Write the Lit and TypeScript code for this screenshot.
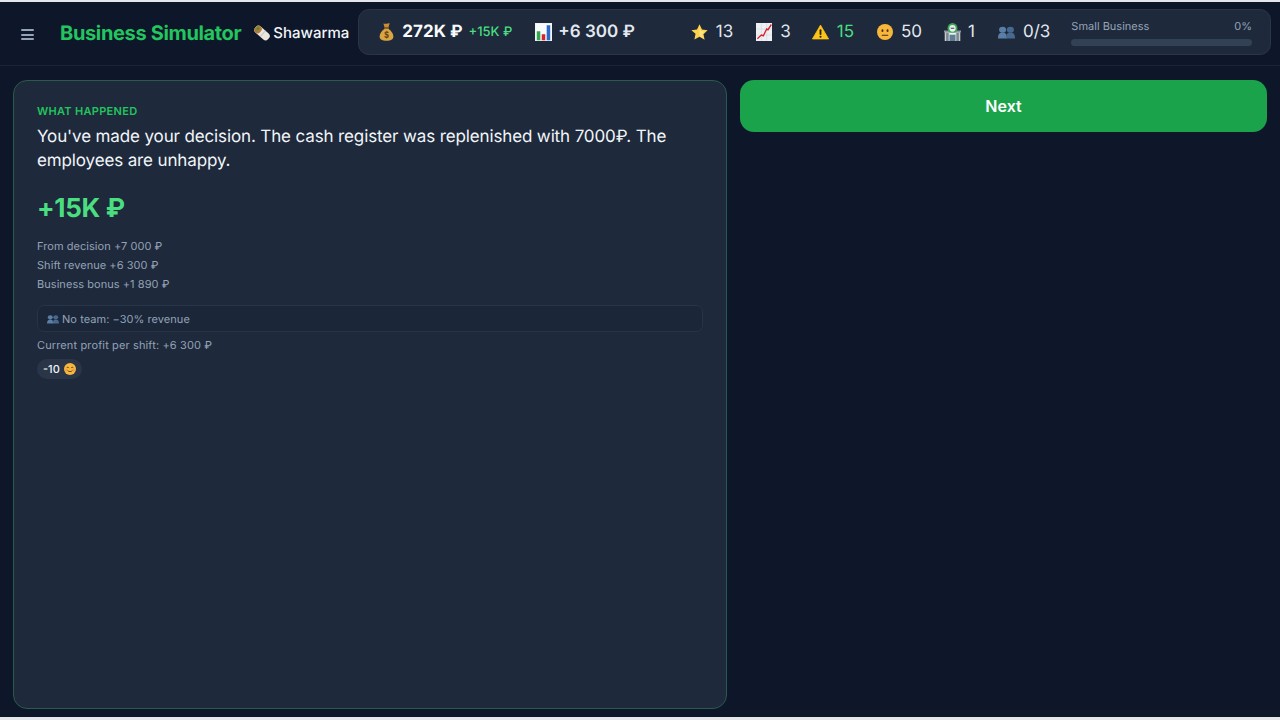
import { LitElement, html, css, svg } from "lit";
import { customElement } from "lit/decorators.js";

const icon = (w: number, h: number, body: unknown, cls = "") =>
  html`<svg class="ic ${cls}" width=${w} height=${h} viewBox="0 0 24 24" preserveAspectRatio="none" aria-hidden="true">${body}</svg>`;

const burrito = svg`
  <g transform="rotate(42 12 12)">
    <rect x="-1" y="6" width="26" height="12" rx="5" fill="#e9e6df"/>
    <rect x="-1" y="6" width="10" height="12" rx="5" fill="#b9793a"/>
    <ellipse cx="3" cy="12" rx="2.800" ry="4.300" fill="#6f8f3a"/>
    <circle cx="3" cy="11" r="1.200" fill="#b5482f"/>
    <rect x="13" y="6" width="1.200" height="12" fill="#bdb9b0"/>
  </g>`;
const bag = svg`
  <path d="M7 0.500c2 1.200 3.200.4 5 .4s3-.8 5-.4l-2 5.500H9z" fill="#c98f36"/>
  <rect x="8" y="5.500" width="8" height="2" rx="1" fill="#8a5a1e"/>
  <path d="M9 7.500C4 10 1 14.500 1 18c0 4 4.500 5.800 11 5.800S23 22 23 18c0-3.500-3-8-8-10.500z" fill="#d9a441"/>
  <text x="12" y="20.500" text-anchor="middle" font-size="13" font-weight="700" font-family="Liberation Sans, sans-serif" fill="#5b3a10">$</text>`;
const bars = svg`
  <rect x="0" y="0" width="24" height="24" fill="#eef1f4"/>
  <rect x="1" y="1" width="22" height="22" fill="#fafbfc"/>
  <rect x="2.500" y="11" width="5" height="12" fill="#2fa84f"/>
  <rect x="9.500" y="15" width="5" height="8" fill="#d8232a"/>
  <rect x="16.500" y="3" width="5" height="20" fill="#2b6cc4"/>`;
const star = svg`<path d="M12 .5l3.500 7.400 8 1-5.900 5.500 1.600 8L12 18l-7.200 3.900 1.600-8L.5 8.900l8-1z" fill="#fbd34d"/>
  <path d="M12 5l2.300 5 5.300.6-3.900 3.600 1 5.200L12 17z" fill="#fff0b0" opacity=".55"/>`;
const trend = svg`
  <rect x="0" y="0" width="24" height="24" fill="#eef1f4"/>
  <path d="M0 8h24M0 16h24M8 0v24M16 0v24" stroke="#c9ced6" stroke-width=".6"/>
  <path d="M2 21l6-5 3 1 5-9 2 1 5-7" fill="none" stroke="#d8232a" stroke-width="2"/>`;
const warn = svg`
  <path d="M12 1.500 23.500 22.500H.5z" fill="#fcc419" stroke="#fcc419" stroke-linejoin="round"/>
  <rect x="10.700" y="8" width="2.600" height="8.500" rx="1.200" fill="#2b2108"/>
  <circle cx="12" cy="19" r="1.500" fill="#2b2108"/>`;
const neutral = svg`
  <circle cx="12" cy="12" r="12" fill="#f6b73c"/>
  <ellipse cx="8.200" cy="10" rx="1.500" ry="2.100" fill="#4a2f0c"/>
  <ellipse cx="15.800" cy="10" rx="1.500" ry="2.100" fill="#4a2f0c"/>
  <rect x="7" y="16" width="10" height="1.600" rx=".8" fill="#4a2f0c"/>`;
const bank = svg`
  <rect x="1" y="11" width="22" height="13" fill="#c7ccd1"/>
  <rect x="0" y="10" width="24" height="2.500" fill="#8f979f"/>
  <circle cx="12" cy="7" r="7" fill="#3aa655"/>
  <circle cx="12" cy="7" r="4.500" fill="#e8f0ea"/>
  <path d="M9.500 7h5" stroke="#445" stroke-width="1.400"/>
  <rect x="3" y="13" width="3.500" height="11" fill="#7b8791"/>
  <rect x="17.500" y="13" width="3.500" height="11" fill="#7b8791"/>
  <rect x="8" y="15" width="8" height="9" fill="#5d7f96"/>
  <rect x="7.500" y="13" width="9" height="2.500" fill="#eef1f3"/>`;
const busts = svg`
  <g fill="#5b7ea6">
    <circle cx="6.500" cy="8" r="5"/>
    <path d="M0 23c0-6 1.500-10 6.500-10s6 4 6 10z"/>
  </g>
  <g fill="#48698f">
    <circle cx="17.500" cy="8" r="5"/>
    <path d="M11.500 23c0-6 1-10 6-10s6.500 4 6.500 10z"/>
  </g>`;
const smile = svg`
  <circle cx="12" cy="12" r="12" fill="#f6b73c"/>
  <path d="M5.500 9.500c1-1.500 3-1.500 4 0M14.500 9.500c1-1.500 3-1.500 4 0" fill="none" stroke="#4a2f0c" stroke-width="1.600" stroke-linecap="round"/>
  <path d="M7.500 15.500c2 2.500 7 2.500 9 0" fill="none" stroke="#4a2f0c" stroke-width="1.600" stroke-linecap="round"/>
  <circle cx="5" cy="14" r="2.400" fill="#ef8a5a" opacity=".7"/>
  <circle cx="19" cy="14" r="2.400" fill="#ef8a5a" opacity=".7"/>`;

@customElement("app-root")
export class AppRoot extends LitElement {
  static styles = css`
    :host {
      display: block;
      height: 720px;
      box-sizing: border-box;
      padding: 2px 0 3px;
      background: #e4e6ea;
      font-family: Inter, "Liberation Sans", sans-serif;
      color: #f1f5f9;
      overflow: hidden;
      text-rendering: geometricPrecision;
    }
    * { box-sizing: border-box; }
    .ic { display: block; flex: none; }
    .app {
      height: 100%;
      background: #0e162a;
      display: flex;
      flex-direction: column;
    }
    header {
      flex: none;
      height: 64px;
      border-bottom: 1px solid #1a2436;
      display: flex;
      align-items: center;
      padding: 0 9px 0 21px;
    }
    .menu {
      flex: none;
      width: 13px;
      height: 11px;
      margin-right: 26px;
      margin-top: 2px;
      display: flex;
      flex-direction: column;
      justify-content: space-between;
    }
    .menu span { display: block; height: 2px; background: #94a3b8; border-radius: 1px; }
    .title {
      font-size: 20px;
      font-weight: 700;
      color: #22c55e;
      white-space: nowrap;
      letter-spacing: -0.35px;
      margin: -2px 13px 0 0;
    }
    .biz {
      display: flex;
      align-items: center;
      gap: 3px;
      font-size: 15px;
      font-weight: 500;
      white-space: nowrap;
      margin: -2px 9px 0 0;
    }
    .stats {
      flex: 1;
      height: 46px;
      margin-top: -3px;
      display: flex;
      align-items: center;
      background: #1e293b;
      border: 1px solid #2a3648;
      border-radius: 11px;
      padding: 0 18px 0 20px;
      white-space: nowrap;
    }
    .s { display: flex; align-items: center; gap: 8px; font-size: 17px; }
    .strong { font-weight: 700; color: #f8fafc; font-size: 17px; }
    .semi { font-weight: 600; color: #e2e8f0; font-size: 17px; }
    .delta { font-size: 13px; font-weight: 500; color: #4ade80; margin-left: -2px; }
    .green { color: #4ade80; }
    .first { gap: 8px; margin-right: 23px; }
    .second { gap: 6px; margin-right: 56px; }
    .m { margin-right: 23px; color: #e2e8f0; }
    .m.tight2 { margin-right: 21px; }
    .m.tight1 { margin-right: 22px; }
    .m.narrow { gap: 7px; }
    .m.last { margin-right: 21px; }
    .prog { flex: 1; display: flex; flex-direction: column; gap: 6px; padding-top: 1px; }
    .prog-top {
      display: flex;
      justify-content: space-between;
      font-size: 11px;
      line-height: 13px;
      color: #94a3b8;
    }
    .track { height: 7px; border-radius: 4px; background: #334155; }
    main {
      flex: 1;
      min-height: 0;
      display: grid;
      grid-template-columns: 714px 527px;
      gap: 13px;
      padding: 14px 13px 8px;
      align-items: start;
    }
    .card {
      height: 100%;
      background: #1e293b;
      border: 1px solid #2a5a4a;
      border-radius: 14px;
      padding: 23px 23px;
      display: flex;
      flex-direction: column;
      align-items: stretch;
    }
    .eyebrow {
      font-size: 11px;
      line-height: 15px;
      font-weight: 600;
      letter-spacing: 0.3px;
      color: #22c55e;
      text-transform: uppercase;
      margin-bottom: 6px;
    }
    .msg { font-size: 17px; line-height: 24px; font-weight: 400; letter-spacing: -0.13px; color: #f1f5f9; margin: 0 0 19px; }
    .amount { font-size: 26px; line-height: 34px; font-weight: 700; letter-spacing: -0.3px; color: #4ade80; margin-bottom: 11px; }
    .lines { font-size: 11px; line-height: 19px; letter-spacing: 0.05px; color: #94a3b8; margin-bottom: 11px; }
    .notice {
      height: 27px;
      display: flex;
      align-items: center;
      gap: 3px;
      padding: 0 9px;
      font-size: 11px;
      letter-spacing: 0.05px;
      color: #94a3b8;
      background: #1b2638;
      border: 1px solid #273347;
      border-radius: 7px;
      margin-bottom: 4px;
    }
    .profit { font-size: 11px; line-height: 19px; letter-spacing: 0.13px; color: #94a3b8; margin-bottom: 4px; }
    .pill {
      align-self: flex-start;
      height: 20px;
      display: flex;
      align-items: center;
      gap: 4px;
      padding: 0 6px;
      font-size: 11px;
      font-weight: 500;
      color: #f1f5f9;
      background: #2a3648;
      border-radius: 10px;
    }
    .next {
      height: 52px;
      border: 0;
      border-radius: 14px;
      background: #1aa34a;
      color: #fff;
      font: 600 16px Inter, "Liberation Sans", sans-serif;
    }
  `;

  render() {
    return html`<div class="app">
      <header>
        <div class="menu"><span></span><span></span><span></span></div>
        <div class="title">Business Simulator</div>
        <div class="biz">${icon(16, 16, burrito)}<span>Shawarma</span></div>
        <div class="stats">
          <div class="s first">
            ${icon(15, 18, bag)}<span class="strong">272K ₽</span><span class="delta">+15K ₽</span>
          </div>
          <div class="s second">${icon(17, 18, bars)}<span class="semi">+6 300 ₽</span></div>
          <div class="s m">${icon(17, 17, star)}<span>13</span></div>
          <div class="s m tight2">${icon(16, 18, trend)}<span>3</span></div>
          <div class="s m">${icon(17, 16, warn)}<span class="green">15</span></div>
          <div class="s m tight1">${icon(16, 16, neutral)}<span>50</span></div>
          <div class="s m narrow">${icon(17, 18, bank)}<span>1</span></div>
          <div class="s m last">${icon(17, 14, busts)}<span>0/3</span></div>
          <div class="prog">
            <div class="prog-top"><span>Small Business</span><span>0%</span></div>
            <div class="track"></div>
          </div>
        </div>
      </header>
      <main>
        <section class="card">
          <div class="eyebrow">What happened</div>
          <p class="msg">You've made your decision. The cash register was replenished with 7000₽. The employees are unhappy.</p>
          <div class="amount">+15K ₽</div>
          <div class="lines">
            <div>From decision +7 000 ₽</div>
            <div>Shift revenue +6 300 ₽</div>
            <div>Business bonus +1 890 ₽</div>
          </div>
          <div class="notice">${icon(12, 10, busts)}<span>No team: −30% revenue</span></div>
          <div class="profit">Current profit per shift: +6 300 ₽</div>
          <div class="pill"><span>-10</span>${icon(12, 12, smile)}</div>
        </section>
        <button class="next">Next</button>
      </main>
    </div>`;
  }
}
